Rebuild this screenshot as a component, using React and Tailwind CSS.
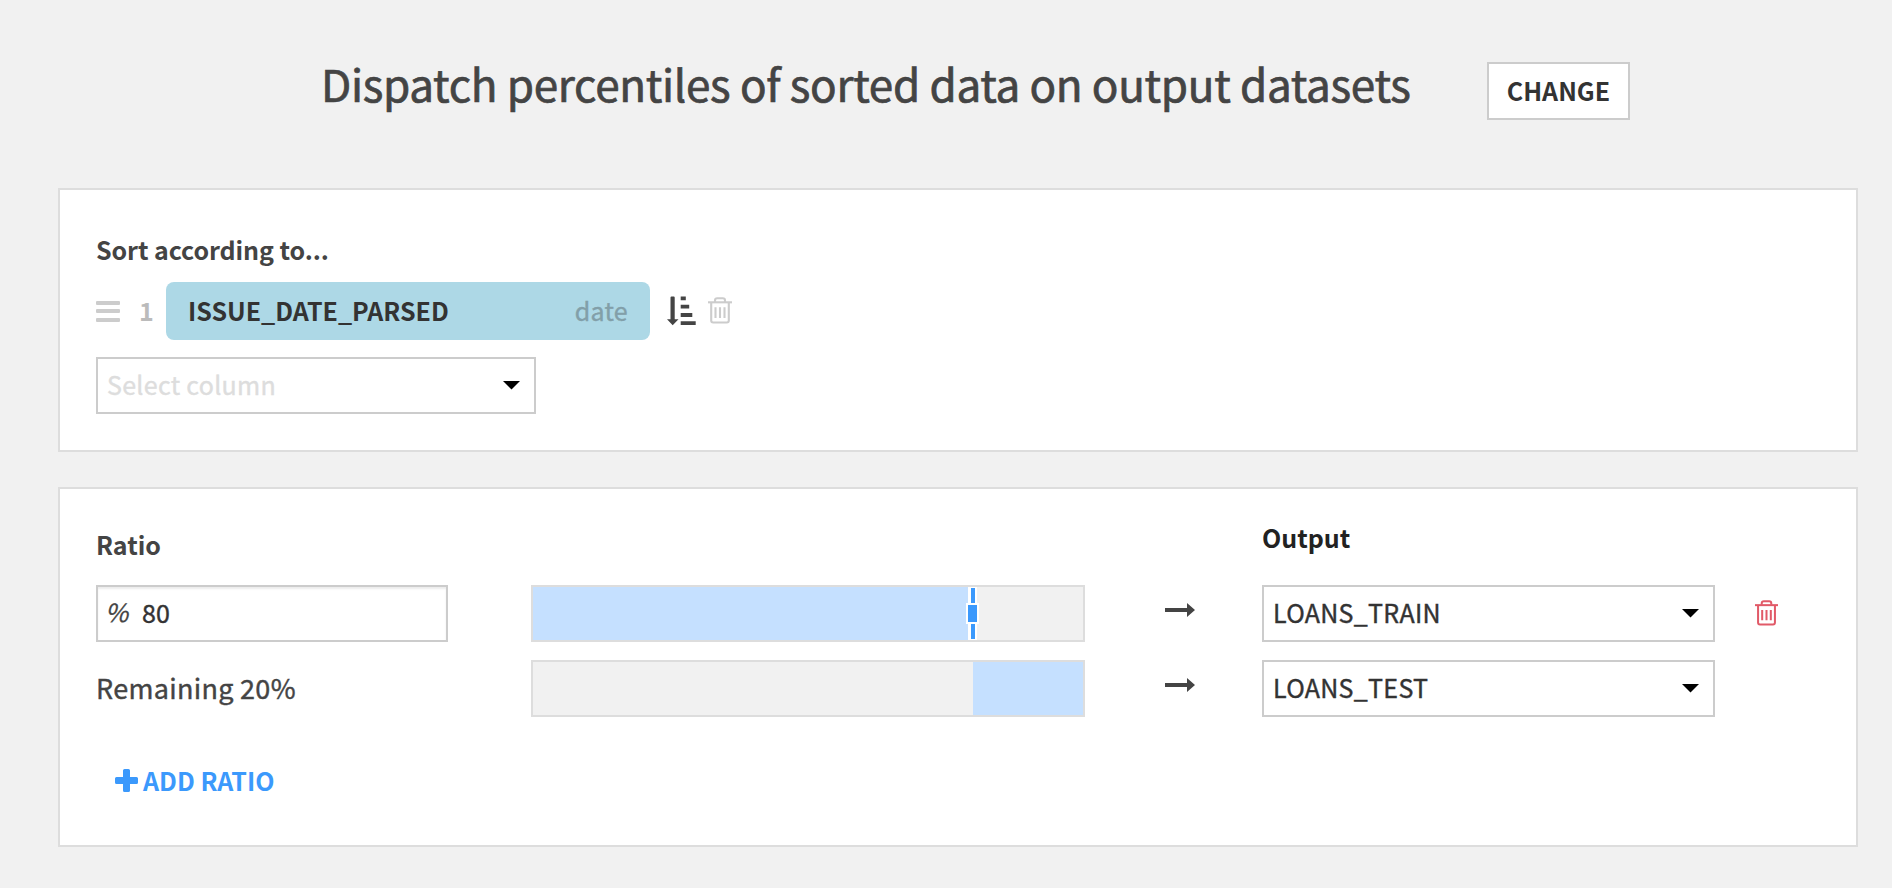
const percent = 80;

function Caret() {
  return (
    <svg width="17" height="9" viewBox="0 0 17 9" className="shrink-0" fill="#000">
      <path d="M0 0H17L8.5 8.5Z" />
    </svg>
  );
}

function Trash({ className, w, h }) {
  return (
    <svg width={w} height={h} viewBox="0 0 24 27" className={className} fill="none" stroke="currentColor" strokeWidth="2.1">
      <path d="M0 5.3H24" />
      <path d="M7 5V3.500Q7 1.300 9.200 1.300H14.800Q17 1.300 17 3.500V5" />
      <path d="M3.200 5.500V23.500Q3.200 25.500 5.200 25.500H18.800Q20.800 25.500 20.800 23.500V5.500" />
      <path d="M7.500 10.300V21M12 10.300V21M16.500 10.300V21" />
    </svg>
  );
}

function SortIcon() {
  return (
    <svg width="30" height="30" viewBox="0 0 30 30" fill="#444">
      <path d="M3.500 1.500Q3.500 .5 4.500 .5H6.700Q7.700 .5 7.700 1.500V23.300H11.500L5.700 29.200L0 23.300H3.500Z" />
      <path d="M13.700 .6H18.800V4.300H13.700ZM13.700 8.700H22.200V12.500H13.700ZM13.700 17H25.300V21H13.700ZM13.700 25.200H28.700V29H13.700Z" />
    </svg>
  );
}

function Arrow() {
  return (
    <svg width="30" height="14" viewBox="0 0 30 14" className="mb-2" fill="#444">
      <path d="M0 5H22V0L30 7L22 14V9H0Z" />
    </svg>
  );
}

function Select({ value, placeholder, className }) {
  return (
    <div className={`flex h-[57px] items-center justify-between border-2 border-[#ccc] bg-white pl-[9px] pr-[14px] ${className}`}>
      <span className={`pb-[3px] tracking-[0.3px] [-webkit-text-stroke:0.4px] ${placeholder ? "text-[#ddd]" : "text-[#333]"}`}>
        {value || placeholder}
      </span>
      <Caret />
    </div>
  );
}

export default function App() {
  return (
    <div className="flex h-[888px] w-[1892px] flex-col overflow-hidden bg-[#f1f1f1] font-['Noto_Sans_CJK_SC','Noto_Sans',sans-serif] text-[25px] leading-9 text-[#444]">
      <header className="flex h-[188px] items-start pl-[321px]">
        <h1 className="mt-[53px] w-[1166px] whitespace-nowrap text-[44px] leading-[60px] tracking-[-0.31px] [-webkit-text-stroke:0.7px]">
          Dispatch percentiles of sorted data on output datasets
        </h1>
        <button className="mt-[62px] h-[58px] w-[143px] border-2 border-[#ccc] bg-white pb-0.5 font-semibold text-[#333]">CHANGE</button>
      </header>

      <section className="ml-[58px] h-[264px] w-[1800px] border-2 border-[#ddd] bg-white pl-9 pt-[41px]">
        <div className="font-semibold tracking-[-0.07px]">Sort according to...</div>
        <div className="mt-[15px] flex h-[58px] items-center">
          <div className="flex h-[21px] w-6 flex-col justify-between">
            <i className="h-1 rounded-[1px] bg-[#ccc]" />
            <i className="h-1 rounded-[1px] bg-[#ccc]" />
            <i className="h-1 rounded-[1px] bg-[#ccc]" />
          </div>
          <span className="ml-[19px] w-[27px] pb-[3px] font-semibold text-[#bbb]">1</span>
          <div className="flex h-[58px] w-[484px] items-center justify-between rounded-lg bg-[#add8e6] px-[22px] pb-0.5">
            <span className="font-semibold text-[#333]">ISSUE_DATE_PARSED</span>
            <span className="tracking-[0.3px] text-[#829fa9] [-webkit-text-stroke:0.4px]">date</span>
          </div>
          <div className="ml-[17px] flex gap-[11px]">
            <SortIcon />
            <Trash w={24} h={27} className="mt-px text-[#ccc]" />
          </div>
        </div>
        <Select placeholder="Select column" className="mt-[17px] w-[440px]" />
      </section>

      <section className="ml-[58px] mt-[35px] h-[360px] w-[1800px] border-2 border-[#ddd] bg-white pl-9 pt-[30px]">
        <div className="flex h-[66px] font-semibold">
          <div className="w-[1166px] pt-[7px]">Ratio</div>
          <div className="text-[#222]">Output</div>
        </div>
        <div className="flex h-[57px] items-center">
          <div className="flex h-[57px] w-[352px] items-center border-2 border-[#ccc] pb-[3px] pl-[7px] shadow-[inset_0_2px_2px_rgba(0,0,0,0.075)]">
            <span className="w-[37px] pb-[3px] text-[25px] italic [-webkit-text-stroke:0.3px]">%</span>
            <span className="text-[#333] [-webkit-text-stroke:0.4px]">{percent}</span>
          </div>
          <div className="relative ml-[83px] flex h-[57px] w-[554px] border-2 border-[#ddd] bg-[#f1f1f1]">
            <div className="bg-[#c5e0ff]" style={{ width: `${percent}%` }} />
            <div className="absolute left-[433px] top-0 flex h-full w-[13px] flex-col items-center">
              <i className="flex h-4 w-[9px] justify-center bg-white pt-px"><i className="w-1 bg-[#3b99fc]" /></i>
              <i className="h-[21px] w-[13px] border-2 border-white bg-[#3b99fc]" />
              <i className="flex h-4 w-[9px] justify-center bg-white pb-px"><i className="w-1 bg-[#3b99fc]" /></i>
            </div>
          </div>
          <div className="ml-[80px] w-[97px]"><Arrow /></div>
          <Select value="LOANS_TRAIN" className="w-[453px]" />
          <Trash w={23} h={26} className="mb-0.5 ml-[40px] text-[#e15a68]" />
        </div>
        <div className="mt-[18px] flex h-[57px] items-center">
          <div className="w-[435px] pb-0.5 text-[27px] tracking-[0.3px] [-webkit-text-stroke:0.4px]">Remaining {100 - percent}%</div>
          <div className="flex h-[57px] w-[554px] justify-end border-2 border-[#ddd] bg-[#f1f1f1]">
            <div className="bg-[#c5e0ff]" style={{ width: `${100 - percent}%` }} />
          </div>
          <div className="ml-[80px] w-[97px]"><Arrow /></div>
          <Select value="LOANS_TEST" className="w-[453px]" />
        </div>
        <div className="mt-[45px] flex items-center gap-[5px] pl-[19px] font-semibold text-[#3b99fc]">
          <svg width="23" height="23" viewBox="0 0 23 23" fill="currentColor">
            <path d="M9.500 0h4q1.500 0 1.500 1.500V8h6.500q1.500 0 1.500 1.500v4q0 1.500-1.500 1.500H15v6.500q0 1.500-1.500 1.500h-4Q8 23 8 21.500V15H1.500Q0 15 0 13.500v-4Q0 8 1.500 8H8V1.500Q8 0 9.500 0Z" />
          </svg>
          <span>ADD RATIO</span>
        </div>
      </section>
    </div>
  );
}
